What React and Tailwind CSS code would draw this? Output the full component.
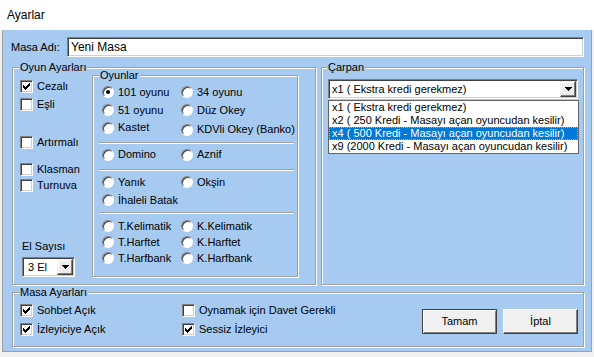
import React from "react";

// classic windows checkmark, 7x7 pixels
const checkPixels = [
  [6, 0, 1], [5, 1, 2], [0, 2, 1], [4, 2, 3], [0, 3, 2], [3, 3, 3], [0, 4, 5], [1, 5, 3], [2, 6, 1],
];

const CheckBox = ({ label, checked, className = "" }) => (
  <div className={`flex items-center gap-[4px] font-normal ${className}`}>
    <span className="flex h-[13px] w-[13px] shrink-0 items-center justify-center border border-t-[#808080] border-l-[#808080] border-b-white border-r-white bg-white shadow-[inset_1px_1px_0_#404040,inset_-1px_-1px_0_#d4d0c8]">
      {checked && (
        <svg width="7" height="7" viewBox="0 0 7 7" shapeRendering="crispEdges">
          {checkPixels.map(([x, y, w], i) => (
            <rect key={i} x={x} y={y} width={w} height="1" fill="#000" />
          ))}
        </svg>
      )}
    </span>
    <span className="whitespace-nowrap">{label}</span>
  </div>
);

const Radio = ({ label, checked, className = "" }) => (
  <div className={`flex items-center gap-[4px] font-normal ${className}`}>
    <span className="flex h-[12px] w-[12px] shrink-0 items-center justify-center rounded-full border border-t-[#808080] border-l-[#808080] border-b-white border-r-white bg-white shadow-[inset_1px_1px_0_#404040]">
      {checked && <span className="h-[4px] w-[4px] rounded-full bg-black" />}
    </span>
    <span className="whitespace-nowrap">{label}</span>
  </div>
);

const GroupBox = ({ title, className = "", legendLeft = "left-[6px]", children }) => (
  <div className={`relative border border-[#a0a0a0] shadow-[inset_1px_1px_0_#fff,1px_1px_0_#fff] ${className}`}>
    <span className={`absolute -top-[7px] ${legendLeft} bg-[#a6caf0] px-px leading-[13px] whitespace-nowrap`}>
      {title}
    </span>
    {children}
  </div>
);

const Separator = ({ className = "" }) => (
  <div className={`h-px w-[195px] bg-[#a0a0a0] shadow-[0_1px_0_#fff] ${className}`} />
);

const Combo = ({ value, className = "", textPad = "pl-[3px]" }) => (
  <div className={`flex h-[20px] items-center border border-t-[#808080] border-l-[#808080] border-b-white border-r-white bg-white shadow-[inset_1px_1px_0_#404040,inset_-1px_-1px_0_#d4d0c8] ${className}`}>
    <span className={`flex-1 whitespace-nowrap ${textPad}`}>{value}</span>
    <span className="mr-px flex h-[16px] w-[16px] items-center justify-center border border-t-[#f0f0f0] border-l-[#f0f0f0] border-b-[#404040] border-r-[#404040] bg-[#ececec] shadow-[inset_-1px_-1px_0_#808080,inset_1px_1px_0_#fff]">
      <svg width="7" height="4" viewBox="0 0 7 4" shapeRendering="crispEdges">
        <rect x="0" y="0" width="7" height="1" fill="#000" />
        <rect x="1" y="1" width="5" height="1" fill="#000" />
        <rect x="2" y="2" width="3" height="1" fill="#000" />
        <rect x="3" y="3" width="1" height="1" fill="#000" />
      </svg>
    </span>
  </div>
);

const multipliers = [
  "x1 ( Ekstra kredi gerekmez)",
  "x2 ( 250 Kredi - Masayı açan oyuncudan kesilir)",
  "x4 ( 500 Kredi - Masayı açan oyuncudan kesilir)",
  "x9 (2000 Kredi - Masayı açan oyuncudan kesilir)",
];

export default function App() {
  return (
    <div className="flex h-[357px] w-[594px] flex-col bg-[#f0f0f0] font-['Liberation_Sans',Arial,sans-serif] text-[11px] font-normal leading-[13px] text-black">
      {/* Title */}
      <div className="flex h-[30px] items-center bg-white pl-[7px] text-[12px]">Ayarlar</div>

      {/* Body */}
      <div className="ml-[2px] flex h-[322px] w-[590px] flex-col border-x border-b border-[#a0a0a0] bg-[#a6caf0] pl-[9px] pr-[7px] pt-[7px]">
        {/* Masa adı */}
        <div className="flex h-[20px] items-center">
          <span className="-ml-px w-[56px]">Masa Adı:</span>
          <div className="flex h-[20px] w-[517px] items-center border border-t-[#808080] border-l-[#808080] border-b-white border-r-white bg-white pl-[3px] text-[12px] shadow-[inset_1px_1px_0_#404040,inset_-1px_-1px_0_#d4d0c8]">
            Yeni Masa
          </div>
        </div>

        <div className="mt-[10px] flex gap-[5px]">
          {/* Oyun Ayarları */}
          <GroupBox title="Oyun Ayarları" className="flex h-[218px] w-[304px]">
            <div className="flex w-[79px] flex-col pl-[7px]">
              <CheckBox label="Cezalı" checked className="mt-[10px] h-[17px]" />
              <CheckBox label="Eşli" className="mt-px h-[17px]" />
              <CheckBox label="Artırmalı" className="mt-[21px] h-[17px]" />
              <CheckBox label="Klasman" className="mt-[10px] h-[16px]" />
              <CheckBox label="Turnuva" className="h-[17px]" />
              <span className="ml-[2px] mt-[46px]">El Sayısı</span>
              <Combo value="3 El" className="ml-[2px] mt-[4px] w-[53px]" textPad="pl-[5px]" />
            </div>

            <GroupBox title="Oyunlar" className="mt-[7px] flex h-[202px] w-[206px] flex-col pl-[6px]">
              <div className="ml-[3px] mt-[7px] flex h-[18px] items-center">
                <Radio label="101 oyunu" checked className="w-[79px]" />
                <Radio label="34 oyunu" />
              </div>
              <div className="ml-[3px] flex h-[18px] items-center">
                <Radio label="51 oyunu" className="w-[79px]" />
                <Radio label="Düz Okey" />
              </div>
              <div className="ml-[3px] flex h-[17px] items-start">
                <Radio label="Kastet" className="h-[17px] w-[79px]" />
                <Radio label="KDVli Okey (Banko)" className="mt-[2px] h-[17px]" />
              </div>
              <Separator className="mt-[6px]" />
              <div className="ml-[3px] mt-[3px] flex h-[17px] items-center">
                <Radio label="Domino" className="w-[79px]" />
                <Radio label="Aznif" />
              </div>
              <Separator className="mt-[6px]" />
              <div className="ml-[3px] mt-[3px] flex h-[18px] items-center">
                <Radio label="Yanık" className="w-[79px]" />
                <Radio label="Okşin" />
              </div>
              <div className="ml-[3px] flex h-[18px] items-center">
                <Radio label="İhaleli Batak" />
              </div>
              <Separator className="mt-[3px]" />
              <div className="ml-[3px] mt-[5px] flex h-[16px] items-center">
                <Radio label="T.Kelimatik" className="w-[79px]" />
                <Radio label="K.Kelimatik" />
              </div>
              <div className="ml-[3px] flex h-[16px] items-center">
                <Radio label="T.Harftet" className="w-[79px]" />
                <Radio label="K.Harftet" />
              </div>
              <div className="ml-[3px] flex h-[16px] items-center">
                <Radio label="T.Harfbank" className="w-[79px]" />
                <Radio label="K.Harfbank" />
              </div>
            </GroupBox>
          </GroupBox>

          {/* Çarpan */}
          <GroupBox title="Çarpan" legendLeft="left-[5px]" className="h-[218px] w-[263px]">
            <div className="relative ml-[6px] mt-[11px] w-[250px]">
              <Combo value={multipliers[0]} className="w-[250px]" />
              {/* open dropdown list */}
              <div className="absolute left-0 top-[21px] z-10 w-[251px] border border-[#646464] bg-white">
                {multipliers.map((m, i) => (
                  <div
                    key={m}
                    className={`h-[13px] whitespace-nowrap pl-[3px] leading-[13px] ${
                      i === 2 ? "bg-[#0078d7] text-white outline-1 outline-dotted -outline-offset-1 outline-[#f59b3c]" : ""
                    }`}
                  >
                    {m}
                  </div>
                ))}
              </div>
            </div>
          </GroupBox>
        </div>

        {/* Masa Ayarları */}
        <GroupBox title="Masa Ayarları" className="mt-[7px] flex h-[55px] w-[572px]">
          <div className="flex w-[169px] flex-col pl-[7px] pt-[8px]">
            <CheckBox label="Sohbet Açık" checked className="h-[19px]" />
            <CheckBox label="İzleyiciye Açık" checked className="h-[19px]" />
          </div>
          <div className="flex flex-col pt-[8px]">
            <CheckBox label="Oynamak için Davet Gerekli" className="h-[19px]" />
            <CheckBox label="Sessiz İzleyici" checked className="h-[19px]" />
          </div>
          <div className="ml-auto mr-[5px] mt-[16px] flex gap-[6px]">
            <button className="flex h-[25px] w-[75px] items-center justify-center border border-[#404040] bg-[#f0f0f0] shadow-[inset_1px_1px_0_#fff,inset_-1px_-1px_0_#808080]">
              Tamam
            </button>
            <button className="flex h-[25px] w-[75px] items-center justify-center border border-t-white border-l-white border-b-[#404040] border-r-[#404040] bg-[#f0f0f0] shadow-[inset_-1px_-1px_0_#808080]">
              İptal
            </button>
          </div>
        </GroupBox>
      </div>
    </div>
  );
}
